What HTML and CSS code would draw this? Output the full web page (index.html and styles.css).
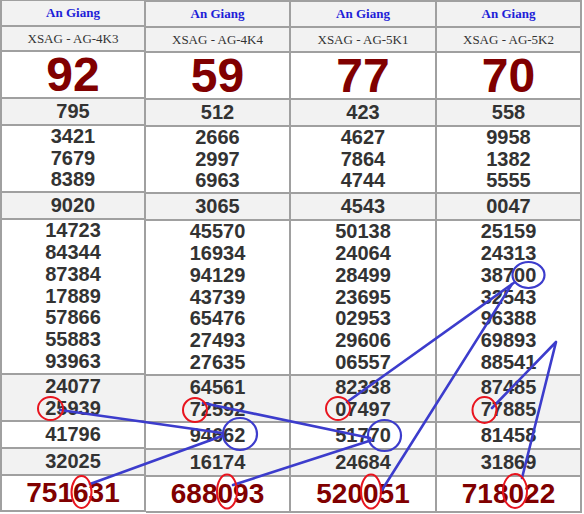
FILE: index.html
```html
<!DOCTYPE html>
<html>
<head>
<meta charset="utf-8">
<link rel="stylesheet" href="styles.css">
</head>
<body>
<div class="board">
  <div class="tbl left">
    <div class="col">
      <div class="cell head">An Giang</div>
      <div class="cell sub">XSAG - AG-4K3</div>
      <div class="cell big">92</div>
      <div class="cell r1 gray">795</div>
      <div class="cell r3"><div>3421</div><div>7679</div><div>8389</div></div>
      <div class="cell r1 gray">9020</div>
      <div class="cell r7"><div>14723</div><div>84344</div><div>87384</div><div>17889</div><div>57866</div><div>55883</div><div>93963</div></div>
      <div class="cell r2 gray"><div>24077</div><div>25939</div></div>
      <div class="cell r1">41796</div>
      <div class="cell r1 gray">32025</div>
      <div class="cell special">751631</div>
    </div>
  </div>
  <div class="tbl right">
    <div class="col">
      <div class="cell head">An Giang</div>
      <div class="cell sub">XSAG - AG-4K4</div>
      <div class="cell big">59</div>
      <div class="cell r1 gray">512</div>
      <div class="cell r3"><div>2666</div><div>2997</div><div>6963</div></div>
      <div class="cell r1 gray">3065</div>
      <div class="cell r7"><div>45570</div><div>16934</div><div>94129</div><div>43739</div><div>65476</div><div>27493</div><div>27635</div></div>
      <div class="cell r2 gray"><div>64561</div><div>72592</div></div>
      <div class="cell r1">94662</div>
      <div class="cell r1 gray">16174</div>
      <div class="cell special">688093</div>
    </div>
    <div class="col wide">
      <div class="cell head">An Giang</div>
      <div class="cell sub">XSAG - AG-5K1</div>
      <div class="cell big">77</div>
      <div class="cell r1 gray">423</div>
      <div class="cell r3"><div>4627</div><div>7864</div><div>4744</div></div>
      <div class="cell r1 gray">4543</div>
      <div class="cell r7"><div>50138</div><div>24064</div><div>28499</div><div>23695</div><div>02953</div><div>29606</div><div>06557</div></div>
      <div class="cell r2 gray"><div>82338</div><div>07497</div></div>
      <div class="cell r1">51770</div>
      <div class="cell r1 gray">24684</div>
      <div class="cell special">520051</div>
    </div>
    <div class="col">
      <div class="cell head">An Giang</div>
      <div class="cell sub">XSAG - AG-5K2</div>
      <div class="cell big">70</div>
      <div class="cell r1 gray">558</div>
      <div class="cell r3"><div>9958</div><div>1382</div><div>5555</div></div>
      <div class="cell r1 gray">0047</div>
      <div class="cell r7"><div>25159</div><div>24313</div><div>38700</div><div>32543</div><div>96388</div><div>69893</div><div>88541</div></div>
      <div class="cell r2 gray"><div>87485</div><div>77885</div></div>
      <div class="cell r1">81458</div>
      <div class="cell r1 gray">31869</div>
      <div class="cell special">718022</div>
    </div>
  </div>
</div>
<svg class="marks" width="584" height="514" viewBox="0 0 584 514">
  <g class="blue-lines">
    <line x1="60" y1="410" x2="222" y2="433"/>
    <line x1="90" y1="484" x2="222" y2="436"/>
    <line x1="203" y1="403" x2="370" y2="438"/>
    <line x1="233" y1="485" x2="372" y2="440"/>
    <line x1="347" y1="402" x2="515" y2="282"/>
    <line x1="382" y1="490" x2="512" y2="284"/>
    <polyline points="492,408 556,342 522,478"/>
  </g>
  <g class="blue-rings">
    <ellipse cx="240" cy="434" rx="17" ry="16"/>
    <ellipse cx="384.5" cy="435.5" rx="16.5" ry="15.5"/>
    <ellipse cx="528.5" cy="275" rx="16" ry="13"/>
  </g>
  <g class="red-rings">
    <ellipse cx="50.5" cy="408.5" rx="12.5" ry="11.5"/>
    <ellipse cx="195" cy="410" rx="12" ry="12"/>
    <ellipse cx="338" cy="408.5" rx="12" ry="11.5"/>
    <ellipse cx="484.5" cy="410" rx="12" ry="13"/>
    <ellipse cx="81.5" cy="492" rx="10" ry="16"/>
    <ellipse cx="227" cy="491.5" rx="10" ry="17"/>
    <ellipse cx="371" cy="491.5" rx="10" ry="17"/>
    <ellipse cx="515" cy="491" rx="12" ry="17"/>
  </g>
</svg>
</body>
</html>
```
FILE: styles.css
```css
html, body {
  margin: 0;
  padding: 0;
  background: #ffffff;
}
body {
  width: 584px;
  height: 514px;
  overflow: hidden;
  position: relative;
  font-family: "Liberation Sans", Arial, sans-serif;
}
.board {
  display: flex;
  align-items: flex-start;
}
.tbl {
  display: flex;
  border-top: 2px solid #a0a0a0;
}
.tbl.left {
  margin-top: -1px;
  border-left: 2px solid #a0a0a0;
}
.col {
  display: flex;
  flex-direction: column;
  width: 143px;
  border-right: 2px solid #a0a0a0;
}
.tbl.left .col {
  width: 142px;
}
.col.wide {
  width: 144px;
}
.cell {
  display: flex;
  flex-direction: column;
  align-items: center;
  justify-content: center;
  border-bottom: 2px solid #a0a0a0;
  background: #ffffff;
  color: #333333;
  font-weight: bold;
  font-size: 20px;
  line-height: 21.8px;
}
.gray {
  background: #f2f2f2;
}
.head {
  height: 24px;
  background: #f2f2f2;
  font-family: "Liberation Serif", "Times New Roman", serif;
  font-size: 13px;
  color: #1e1ed8;
  line-height: 16px;
}
.sub {
  height: 23px;
  background: #f2f2f2;
  font-family: "Liberation Serif", "Times New Roman", serif;
  font-size: 13px;
  font-weight: normal;
  color: #333333;
  line-height: 16px;
}
.big {
  height: 45px;
  font-size: 48px;
  line-height: 45px;
  color: #800000;
}
.r1 {
  height: 25px;
}
.r2 {
  height: 45px;
}
.r3 {
  height: 65px;
}
.r7 {
  height: 153px;
}
.special {
  height: 34px;
  font-size: 28px;
  line-height: 34px;
  color: #800000;
}
.marks {
  position: absolute;
  top: 0;
  left: 0;
  pointer-events: none;
}
.blue-lines line,
.blue-lines polyline {
  stroke: #3c3ccc;
  stroke-width: 2.6;
  fill: none;
  stroke-linecap: round;
  stroke-linejoin: round;
}
.blue-rings ellipse {
  stroke: #3c3ccc;
  stroke-width: 2.2;
  fill: none;
}
.red-rings ellipse {
  stroke: #e8141e;
  stroke-width: 2;
  fill: none;
}
```
